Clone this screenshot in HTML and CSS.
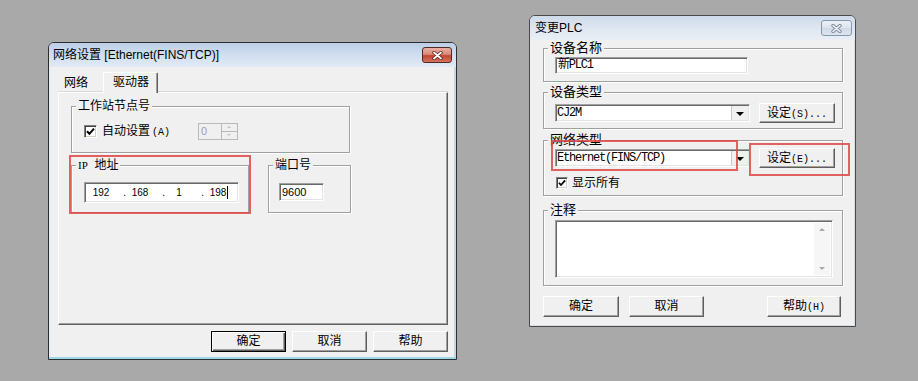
FILE: index.html
```html
<!DOCTYPE html>
<html lang="zh-CN">
<head>
    <meta charset="UTF-8">
    <meta name="viewport" content="width=device-width, initial-scale=1.0">
    <title>网络设置 / 变更PLC</title>
    <link rel="stylesheet" href="styles.css">
</head>
<body>
    <!-- 左: 网络设置 -->
    <div class="win win-net">
        <div class="titlebar">
            <span class="title">网络设置 [Ethernet(FINS/TCP)]</span>
            <span class="close close-active">
                <svg width="13" height="9" viewBox="0 0 13 9">
                    <path d="M3 1.5 L10 7.5 M10 1.5 L3 7.5" stroke="#5a221b" stroke-width="3.4" stroke-linecap="round"/>
                    <path d="M3 1.5 L10 7.5 M10 1.5 L3 7.5" stroke="#fff" stroke-width="1.8" stroke-linecap="round"/>
                </svg>
            </span>
        </div>
        <div class="client client-net">
            <div class="tabs">
                <span class="tab">网络</span>
                <span class="tab tab-sel">驱动器</span>
            </div>
            <div class="tabpanel">
                <div class="group g-node">
                    <span class="group-label">工作站节点号</span>
                    <div class="opt-row">
                        <span class="check">
                            <svg width="9" height="9" viewBox="0 0 9 9"><path d="M1 4.2 L3.4 6.8 L8 1.6" stroke="#000" stroke-width="2" fill="none"/></svg>
                        </span>
                        <span class="opt-text">自动设置<span class="acc">(A)</span></span>
                        <span class="spin">
                            <span class="spin-val">0</span>
                            <span class="spin-btns"><i class="spin-up"></i><i class="spin-dn"></i></span>
                        </span>
                    </div>
                </div>
                <div class="group-row">
                    <div class="group g-ip">
                        <span class="group-label"><span class="serif">IP</span>&nbsp; 地址</span>
                        <div class="sunken ip-field">
                            <span class="oct">192</span><span class="dot">.</span>
                            <span class="oct">168</span><span class="dot">.</span>
                            <span class="oct">1</span><span class="dot">.</span>
                            <span class="oct oct-last">198<i class="caret"></i></span>
                        </div>
                    </div>
                    <div class="group g-port">
                        <span class="group-label">端口号</span>
                        <div class="sunken port-field">9600</div>
                    </div>
                </div>
            </div>
            <div class="btn-row">
                <span class="btn btn-default">确定</span>
                <span class="btn">取消</span>
                <span class="btn">帮助</span>
            </div>
        </div>
        <div class="mark mark-ip"></div>
    </div>

    <!-- 右: 变更PLC -->
    <div class="win win-plc">
        <div class="titlebar titlebar-off">
            <span class="title">变更PLC</span>
            <span class="close close-off">
                <svg width="13" height="9" viewBox="0 0 13 9">
                    <path d="M3 1.5 L10 7.5 M10 1.5 L3 7.5" stroke="#7d8a9c" stroke-width="3.4" stroke-linecap="round"/>
                    <path d="M3 1.5 L10 7.5 M10 1.5 L3 7.5" stroke="#f3f5f8" stroke-width="1.6" stroke-linecap="round"/>
                </svg>
            </span>
        </div>
        <div class="client client-plc">
            <div class="group g-name">
                <span class="group-label">设备名称</span>
                <div class="sunken edit edit-name">新PLC1</div>
            </div>
            <div class="group g-type">
                <span class="group-label">设备类型</span>
                <div class="ctl-row">
                    <div class="sunken combo"><span class="combo-text">CJ2M</span><span class="combo-arrow"></span></div>
                    <span class="btn btn-set">设定<span class="mono">(S)...</span></span>
                </div>
            </div>
            <div class="group g-net">
                <span class="group-label">网络类型</span>
                <div class="ctl-row ctl-row-net">
                    <div class="sunken combo"><span class="combo-text">Ethernet(FINS/TCP)</span><span class="combo-arrow"></span></div>
                    <span class="btn btn-set">设定<span class="mono">(E)...</span></span>
                </div>
                <div class="check-row">
                    <span class="check check-sm">
                        <svg width="8" height="8" viewBox="0 0 9 9"><path d="M1 4.2 L3.4 6.8 L8 1.6" stroke="#000" stroke-width="2" fill="none"/></svg>
                    </span>
                    <span class="check-text">显示所有</span>
                </div>
            </div>
            <div class="group g-note">
                <span class="group-label">注释</span>
                <div class="sunken memo">
                    <span class="memo-scroll"><i class="sc-up"></i><i class="sc-dn"></i></span>
                </div>
            </div>
            <div class="btn-row btn-row-plc">
                <span class="btn btn-w76">确定</span>
                <span class="btn">取消</span>
                <span class="btn btn-help">帮助<span class="mono">(H)</span></span>
            </div>
        </div>
        <div class="mark mark-combo"></div>
        <div class="mark mark-set"></div>
    </div>
</body>
</html>
```

FILE: styles.css
```css
body {
    margin: 0;
    width: 918px;
    height: 381px;
    position: relative;
    overflow: hidden;
    background-color: #a9a9a9;
    font-family: "Liberation Sans", "Noto Sans CJK SC", sans-serif;
    font-size: 12px;
    color: #000;
}

/* 窗口 */
.win {
    position: absolute;
    box-sizing: border-box;
    display: flex;
    flex-direction: column;
    border: 1px solid #2e2e2e;
    border-radius: 6px 6px 0 0;
    background-color: #f0f0f0;
}
.win-net {
    left: 48px;
    top: 42px;
    width: 409px;
    height: 318px;
    box-shadow: inset 0 -2px 0 #9dd8e8, inset -2px 0 0 #c4d6e8, inset 2px 0 0 #e6eef6;
}
.win-plc {
    left: 529px;
    top: 15px;
    width: 327px;
    height: 312px;
    border-color: #4a4a4a;
    box-shadow: inset 0 -1px 0 #d8dde3, inset -1px 0 0 #d8dde3;
}

.titlebar {
    flex: none;
    height: 24px;
    display: flex;
    align-items: center;
    padding: 0 4px 0 4px;
    border-radius: 5px 5px 0 0;
    background: linear-gradient(#bccfe8, #d4e1f1 60%, #e1eaf5);
}
.titlebar-off {
    padding: 0 3px 0 5px;
    background: linear-gradient(#cfdbea, #e1e8f2 60%, #eaeff6);
}
.title {
    line-height: 16px;
    white-space: nowrap;
}
.close {
    margin-left: auto;
    box-sizing: border-box;
    height: 16px;
    display: flex;
    align-items: center;
    justify-content: center;
    border-radius: 3px;
}
.close-active {
    width: 30px;
    border: 1px solid #4f2a24;
    background: linear-gradient(#eab0a4, #d98a7a 45%, #c4442f 55%, #d5735e);
}
.close-off {
    width: 31px;
    border: 1px solid #8596ad;
    background: linear-gradient(#eef2f7, #dbe3ed 50%, #cfd9e6 51%, #dde5ef);
}

.client {
    flex: 1;
    position: relative;
}
.client-net {
    padding: 5px 8px 0 9px;
}
.client-plc {
    padding: 8px 12px 0 13px;
}

/* 标签页 */
.tabs {
    height: 20px;
    display: flex;
    align-items: flex-end;
    padding-left: 1px;
}
.tab {
    box-sizing: border-box;
    width: 44px;
    height: 17px;
    line-height: 17px;
    padding-left: 5px;
}
.tab-sel {
    position: relative;
    z-index: 1;
    width: 55px;
    height: 21px;
    margin-bottom: -1px;
    padding: 1px 0 0 9px;
    background-color: #f0f0f0;
    border: 1px solid #fff;
    border-right-color: #5e5e5e;
    border-bottom: none;
    border-radius: 2px 2px 0 0;
    box-shadow: inset -1px 0 0 #a0a0a0;
}
.tabpanel {
    box-sizing: border-box;
    width: 390px;
    height: 233px;
    padding: 13px 0 0 12px;
    border: 1px solid;
    border-color: #fff #5e5e5e #5e5e5e #fff;
    box-shadow: inset -1px -1px 0 #a0a0a0, 0 -1px 0 #d9d9d9;
}

/* 分组框 */
.group {
    position: relative;
    box-sizing: border-box;
    border: 1px solid #a0a0a0;
    box-shadow: inset 1px 1px 0 #fff, 1px 1px 0 #fff;
}
.group-label {
    position: absolute;
    left: 4px;
    top: -9px;
    padding: 0 2px;
    line-height: 16px;
    background-color: #f0f0f0;
    white-space: nowrap;
}
.client-plc .group-label {
    font-size: 13px;
}
.serif {
    font-family: "Liberation Serif", serif;
    font-size: 11px;
}
.g-node {
    width: 279px;
    height: 47px;
}
.group-row {
    display: flex;
    margin-top: 12px;
}
.g-ip {
    width: 178px;
    height: 48px;
}
.g-port {
    width: 83px;
    height: 48px;
    margin-left: 19px;
}

.opt-row {
    display: flex;
    align-items: center;
    height: 17px;
    margin: 16px 0 0 12px;
}
.check {
    flex: none;
    box-sizing: border-box;
    width: 13px;
    height: 13px;
    display: flex;
    align-items: center;
    justify-content: center;
    background-color: #fff;
    border: 1px solid;
    border-color: #808080 #fff #fff #808080;
    box-shadow: inset 1px 1px 0 #404040, inset -1px -1px 0 #d4d0c8;
}
.check-sm {
    width: 12px;
    height: 12px;
}
.opt-text {
    width: 96px;
    margin-left: 5px;
    line-height: 16px;
    white-space: nowrap;
}
.acc {
    margin-left: 2px;
    font-family: "Liberation Mono", monospace;
    font-size: 10px;
}
.spin {
    box-sizing: border-box;
    width: 40px;
    height: 17px;
    display: flex;
    border: 1px solid #b9b9b9;
    background-color: #f0f0f0;
}
.spin-val {
    flex: 1;
    padding-left: 2px;
    font-size: 11px;
    line-height: 15px;
    color: #a0a0a0;
}
.spin-btns {
    width: 15px;
    display: flex;
    flex-direction: column;
    border-left: 1px solid #b9b9b9;
}
.spin-btns i {
    flex: 1;
    position: relative;
}
.spin-up {
    border-bottom: 1px solid #b9b9b9;
}
.spin-up::after,
.spin-dn::after {
    content: "";
    position: absolute;
    left: 5px;
    top: 2px;
    border-left: 2px solid transparent;
    border-right: 2px solid transparent;
}
.spin-up::after {
    border-bottom: 2px solid #c2c2c2;
}
.spin-dn::after {
    border-top: 2px solid #c2c2c2;
}

/* 凹陷输入框 */
.sunken {
    box-sizing: border-box;
    background-color: #fff;
    border: 1px solid;
    border-color: #a0a0a0 #fff #fff #a0a0a0;
    box-shadow: inset 1px 1px 0 #696969, inset -1px -1px 0 #e3e3e3;
}
.ip-field {
    width: 155px;
    height: 21px;
    margin: 16px 0 0 12px;
    padding-left: 2px;
    display: flex;
    align-items: center;
    font-size: 10px;
}
.oct {
    width: 28px;
    text-align: center;
}
.dot {
    width: 11px;
    text-align: right;
}
.oct-last {
    position: relative;
}
.caret {
    position: absolute;
    left: 23px;
    top: -1px;
    width: 1px;
    height: 13px;
    background-color: #000;
}
.port-field {
    width: 45px;
    height: 18px;
    margin: 17px 0 0 10px;
    padding-left: 2px;
    font-size: 11px;
    line-height: 16px;
}

/* 按钮 */
.btn-row {
    display: flex;
    justify-content: flex-end;
    gap: 6px;
    margin-top: 6px;
}
.btn {
    box-sizing: border-box;
    width: 75px;
    height: 21px;
    line-height: 19px;
    text-align: center;
    white-space: nowrap;
    background-color: #f0f0f0;
    border: 1px solid;
    border-color: #fff #5e5e5e #5e5e5e #fff;
    box-shadow: inset -1px -1px 0 #a0a0a0;
}
.btn-default {
    border-color: #000;
    box-shadow: inset 1px 1px 0 #fff, inset -1px -1px 0 #5e5e5e, inset -2px -2px 0 #a0a0a0;
}
.mono {
    font-family: "Liberation Mono", monospace;
    font-size: 10px;
}

/* 右侧对话框 */
.g-name {
    height: 34px;
}
.edit-name {
    width: 193px;
    height: 17px;
    margin: 8px 0 0 11px;
    padding-left: 2px;
    font-family: "Liberation Mono", "Noto Sans CJK SC", monospace;
    font-size: 12px;
    letter-spacing: -1.2px;
    line-height: 15px;
}
.g-type {
    height: 37px;
    margin-top: 10px;
}
.g-net {
    height: 56px;
    margin-top: 11px;
}
.ctl-row {
    display: flex;
    align-items: center;
    height: 20px;
    margin: 10px 0 0 11px;
}
.ctl-row-net {
    margin-top: 7px;
}
.combo {
    width: 195px;
    height: 18px;
    display: flex;
}
.combo-text {
    flex: 1;
    padding-left: 1px;
    font-family: "Liberation Mono", "Noto Sans CJK SC", monospace;
    font-size: 12px;
    letter-spacing: -1.2px;
    line-height: 16px;
}
.combo-arrow {
    position: relative;
    width: 16px;
    margin: 1px 1px 1px 0;
    background-color: #f0f0f0;
    border-left: 1px solid #c8c8c8;
}
.combo-arrow::after {
    content: "";
    position: absolute;
    left: 4px;
    top: 6px;
    border-left: 4px solid transparent;
    border-right: 4px solid transparent;
    border-top: 4px solid #000;
}
.btn-set {
    width: 76px;
    height: 20px;
    line-height: 18px;
    margin-left: 9px;
}
.check-row {
    display: flex;
    align-items: center;
    height: 13px;
    margin: 8px 0 0 12px;
}
.check-text {
    margin-left: 4px;
    line-height: 16px;
}
.g-note {
    height: 76px;
    margin-top: 14px;
}
.memo {
    width: 278px;
    height: 58px;
    margin: 9px 0 0 11px;
    display: flex;
    justify-content: flex-end;
    padding: 2px 2px 2px 0;
}
.memo-scroll {
    width: 16px;
    display: flex;
    flex-direction: column;
    justify-content: space-between;
    background-color: #f6f6f6;
}
.memo-scroll i {
    position: relative;
    height: 14px;
}
.sc-up::after,
.sc-dn::after {
    content: "";
    position: absolute;
    left: 5px;
    border-left: 3px solid transparent;
    border-right: 3px solid transparent;
}
.sc-up::after {
    top: 5px;
    border-bottom: 3px solid #a8a8a8;
}
.sc-dn::after {
    top: 6px;
    border-top: 3px solid #a8a8a8;
}
.btn-row-plc {
    justify-content: flex-start;
    gap: 10px;
    margin-top: 10px;
}
.btn-w76 {
    width: 76px;
}
.btn-help {
    width: 74px;
    margin-left: auto;
    margin-right: 2px;
}

/* 红框标注 */
.mark {
    position: absolute;
    box-sizing: border-box;
    border: 2px solid rgba(222, 72, 72, 0.85);
    pointer-events: none;
}
.mark-ip {
    left: 20px;
    top: 112px;
    width: 182px;
    height: 59px;
}
.mark-combo {
    left: 21px;
    top: 124px;
    width: 187px;
    height: 31px;
}
.mark-set {
    left: 219px;
    top: 127px;
    width: 101px;
    height: 33px;
}
```
